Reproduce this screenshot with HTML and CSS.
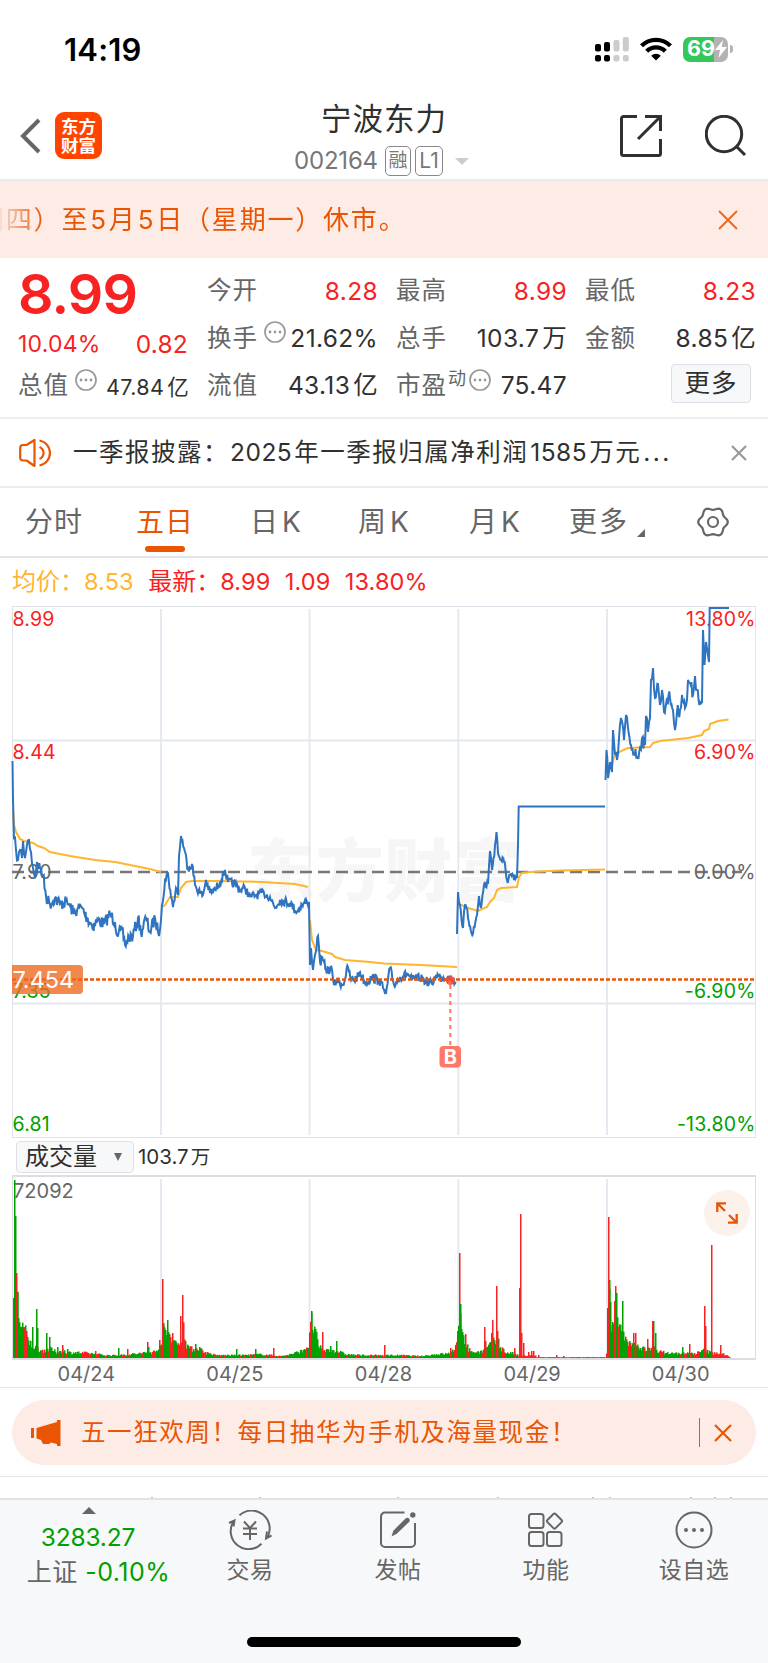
FILE: index.html
```html
<!DOCTYPE html>
<html lang="zh-CN">
<head>
    <meta charset="UTF-8">
    <meta name="viewport" content="width=device-width, initial-scale=1.0">
    <title>宁波东力 002164</title>
    <link rel="stylesheet" href="styles.css">
</head>
<body>
    <div class="status-bar">
        <span class="time">14:19</span>
        <svg class="signal" width="34" height="25" viewBox="0 0 34 25">
            <g fill="#000"><rect x="0" y="7" width="6" height="7.500" rx="2"/><rect x="0" y="18" width="6" height="6.500" rx="2"/><rect x="9" y="5" width="6" height="9.500" rx="2"/><rect x="9" y="18" width="6" height="6.500" rx="2"/></g>
            <g fill="#ccc"><rect x="18.500" y="3" width="6" height="11.500" rx="2"/><rect x="18.500" y="18" width="6" height="6.500" rx="2"/><rect x="27.800" y="0" width="6" height="14.500" rx="2"/><rect x="27.800" y="18" width="6" height="6.500" rx="2"/></g>
        </svg>
        <svg class="wifi" width="32" height="24" viewBox="0 0 32 24">
            <g fill="none" stroke="#000" stroke-width="4.300">
                <path d="M1.500 8.800a20.500 20.500 0 0 1 29 0"/>
                <path d="M6.700 14.300a13 13 0 0 1 18.600 0"/>
            </g>
            <path d="M16 23.500l-4.800-4.800a6.800 6.800 0 0 1 9.600 0z"/>
        </svg>
        <div class="battery">
            <span>69</span>
            <svg width="12" height="18" viewBox="0 0 12 18"><path d="M8 0L0 10h5L3.500 18 12 7H6.800z" fill="#fff"/></svg>
        </div>
        <i class="battery-tip"></i>
    </div>

    <header class="header">
        <div class="header-left">
            <svg width="22" height="36" viewBox="0 0 22 36"><path d="M20 2L4 18l16 16" fill="none" stroke="#666" stroke-width="4"/></svg>
            <div class="logo">东方<br>财富</div>
        </div>
        <div class="header-title">
            <h1>宁波东力</h1>
            <div class="code-row">
                <span class="code">002164</span>
                <span class="tag">融</span>
                <span class="tag tag-l1">L1</span>
                <i class="caret"></i>
            </div>
        </div>
        <div class="header-right">
            <svg width="42" height="42" viewBox="0 0 42 42" fill="none" stroke="#303030" stroke-width="3">
                <path d="M17 1.500H3.500a2 2 0 0 0-2 2v35a2 2 0 0 0 2 2h35a2 2 0 0 0 2-2V24"/>
                <path d="M25 1.500h15.500V16M40 2L18 24"/>
            </svg>
            <svg width="42" height="42" viewBox="0 0 42 42" fill="none" stroke="#303030" stroke-width="3">
                <circle cx="19" cy="19" r="17.700"/>
                <path d="M31.500 31.500l8.500 8.500"/>
            </svg>
        </div>
    </header>

    <div class="notice">
        <div class="notice-text"><span>期四）至<b>5</b>月<b>5</b>日（星期一）休市。</span></div>
        <svg class="notice-close" width="20" height="20" viewBox="0 0 20 20"><path d="M1 1l18 18M19 1L1 19" stroke="#ee6820" stroke-width="2"/></svg>
    </div>

    <section class="quote">
        <div class="quote-main">
            <div class="price">8.99</div>
            <div class="change"><span class="pct">10.04%</span><span>0.82</span></div>
            <div class="cell small"><label>总值</label><svg class="more-dot" viewBox="0 0 22 22"><use href="#dots"/></svg><b>47.84<em>亿</em></b></div>
        </div>
        <div class="quote-col">
            <div class="cell red"><label>今开</label><b>8.28</b></div>
            <div class="cell"><label>换手</label><svg class="more-dot" viewBox="0 0 22 22"><use href="#dots"/></svg><b>21.62%</b></div>
            <div class="cell"><label>流值</label><b>43.13<em>亿</em></b></div>
        </div>
        <div class="quote-col">
            <div class="cell red"><label>最高</label><b>8.99</b></div>
            <div class="cell"><label>总手</label><b>103.7<em>万</em></b></div>
            <div class="cell"><label>市盈<sup>动</sup></label><svg class="more-dot tight" viewBox="0 0 22 22"><use href="#dots"/></svg><b>75.47</b></div>
        </div>
        <div class="quote-col">
            <div class="cell red"><label>最低</label><b>8.23</b></div>
            <div class="cell"><label>金额</label><b>8.85<em>亿</em></b></div>
            <div class="cell"><button class="more-btn">更多</button></div>
        </div>
    </section>

    <div class="news">
        <svg width="34" height="30" viewBox="0 0 34 30" fill="none" stroke="#ea5504" stroke-width="2.200">
            <path d="M15.500 2v26L7.500 22.500H4q-2.800 0-2.800-3V10q0-3 2.800-3h3.500z" stroke-linejoin="round"/>
            <path d="M20.500 9a6.500 6.500 0 0 1 0 12M20.500 2.500a12.700 12.700 0 0 1 0 25"/>
        </svg>
        <span class="news-text">一季报披露：<b class="year">2025</b>年一季报归属净利润<b>1585</b>万元<b class="ell">...</b></span>
        <svg class="news-close" width="16" height="16" viewBox="0 0 16 16"><path d="M1 1l14 14M15 1L1 15" stroke="#999" stroke-width="2.200"/></svg>
    </div>

    <nav class="tabs">
        <span class="tab">分时</span>
        <span class="tab active">五日</span>
        <span class="tab">日<b>K</b></span>
        <span class="tab">周<b>K</b></span>
        <span class="tab">月<b>K</b></span>
        <span class="tab tab-more">更多</span>
        <svg class="gear" width="32" height="32" viewBox="-16 -16 32 32" fill="none" stroke="#666" stroke-width="2.200"><path id="gearPath"/><circle r="5"/></svg>
    </nav>

    <div class="legend">
        <span class="avg">均价：<b>8.53</b></span>
        <span class="last">最新：<b>8.99</b></span>
        <span class="last"><b>1.09</b></span>
        <span class="last"><b>13.80%</b></span>
    </div>

    <svg class="chart" id="priceChart" width="768" height="533" viewBox="0 606 768 533">
        <text class="watermark" x="247" y="896" textLength="274">东方财富</text>
        <g class="grid">
            <path d="M161 609V1135M309.500 609V1135M458.300 609V1135M607 609V1135M12.500 740.500H755M12.500 1003.500H755"/>
        </g>
        <rect class="frame" x="12.500" y="606.500" width="743" height="531"/>
        <path d="M12 872H742" stroke="#777" stroke-width="2.400" stroke-dasharray="12 6"/>
        <g class="axis">
            <text x="12.500" y="626" class="up">8.99</text>
            <text x="12.500" y="758.500" class="up">8.44</text>
            <text x="12.500" y="878.500">7.90</text>
            <text x="12.500" y="998" class="down">7.35</text>
            <text x="12.500" y="1130.500" class="down">6.81</text>
        </g>
        <g class="axis" text-anchor="end">
            <text x="755.500" y="626" class="up">13.80%</text>
            <text x="755.500" y="758.500" class="up">6.90%</text>
            <text x="755.500" y="878.500">0.00%</text>
            <text x="755.500" y="998" class="down">-6.90%</text>
            <text x="755.500" y="1130.500" class="down">-13.80%</text>
        </g>
        <g id="avgLines"></g>
        <g id="priceLines"></g>
        <path d="M12 979.500H755" stroke="#ea5504" stroke-width="2.600" stroke-dasharray="4 2"/>
        <path d="M12 965H79q4 0 4 4V990q0 4-4 4H12z" fill="#ee6a20" fill-opacity=".8"/>
        <text class="cost" x="12.500" y="988">7.454</text>
        <circle cx="450.300" cy="980.500" r="4.600" fill="#ff4a30" fill-opacity=".85"/>
        <path d="M450.300 985V1046" stroke="#ff7766" stroke-width="2" stroke-dasharray="4 4"/>
        <rect x="439.500" y="1046" width="21.500" height="21.500" rx="4" fill="#ff7766"/>
        <text class="buy" x="450.300" y="1063.500" text-anchor="middle">B</text>
    </svg>

    <div class="volume-bar">
        <button class="volume-select">成交量<i></i></button>
        <span>103.7<em>万</em></span>
    </div>

    <div class="volume">
        <svg class="chart" width="768" height="186" viewBox="0 1175 768 186">
            <g class="grid"><path d="M161 1179V1358M309.500 1179V1358M458.300 1179V1358M607 1179V1358"/></g>
            <path d="M12.500 1175V1359M755.500 1175V1359" stroke="#dcdce2"/>
            <path d="M12 1176H756M12 1359H756" stroke="#dcdce2" stroke-width="2"/>
            <text class="axis-vol" x="13" y="1198">72092</text>
            <g id="volumeBars"></g>
        </svg>
        <div class="expand">
            <svg width="24" height="24" viewBox="0 0 24 24" fill="none" stroke="#ea5504" stroke-width="2.300"><path d="M2.300 11V2.300H11M2.500 2.500L10 10M21.700 13v8.700H13M21.500 21.500L14 14"/></svg>
        </div>
    </div>
    <div class="dates"><span>04/24</span><span>04/25</span><span>04/28</span><span>04/29</span><span>04/30</span></div>

    <div class="promo-wrap">
        <div class="promo">
            <svg width="30" height="26" viewBox="0 0 30 26" fill="#ea5504"><path d="M0 8h3v10H0zM5.500 8L26 2V0h3.500v26H26v-2l-6-1.500-2 1.500h-6l-2-4-4.500-1.500z"/></svg>
            <span class="promo-text">五一狂欢周！每日抽华为手机及海量现金！</span>
            <i class="promo-line"></i>
            <svg class="promo-close" width="18" height="18" viewBox="0 0 18 18"><path d="M1 1l16 16M17 1L1 17" stroke="#ea5504" stroke-width="2.200"/></svg>
        </div>
    </div>
    <div class="peek">
        <svg width="768" height="2" viewBox="0 0 768 2" fill="#bbb"><path d="M151 1h2v1h-2zM259 1h2v1h-2zM397 1h2v1h-2zM497 1h2v1h-2zM592 1h2v1h-2zM609 1h2v1h-2zM690 1h2v1h-2zM714 1h2v1h-2zM730 1h2v1h-2z"/></svg>
    </div>

    <footer class="bottom">
        <div class="index">
            <i class="up-caret"></i>
            <div class="green">3283.27</div>
            <div class="index-row">上证 <span class="green">-0.10%</span></div>
        </div>
        <div class="tool">
            <svg width="44" height="40" viewBox="-22 -20 44 40" fill="none" stroke="#666" stroke-width="2">
                <path d="M-10.500-14.700A18 18 0 0 1 17.300 7.500M11.500 13.800A18 18 0 0 1-16.500-8.500"/>
                <path d="M21.500 5.500l-5.500 3 1-7M-21-7l5.500-2.500-1 6"/>
                <path d="M-6-8.500L0-2l6-6.500M-7-1.500H7M-7 4H7M0-2V10"/>
            </svg>
            <span>交易</span>
        </div>
        <div class="tool">
            <svg width="40" height="40" viewBox="0 0 40 40" fill="none" stroke="#666" stroke-width="2">
                <path d="M26.500 2.500H7a4 4 0 0 0-4 4V33a4 4 0 0 0 4 4H33a4 4 0 0 0 4-4V13"/>
                <g fill="#666" stroke="none"><path d="M13.500 26.500l1.800-5.800L27.500 8.500q2-1.500 3.500 0t0 3.500L18.800 23.800z"/><circle cx="34.800" cy="5" r="2.700"/></g>
            </svg>
            <span>发帖</span>
        </div>
        <div class="tool">
            <svg width="40" height="40" viewBox="0 0 40 40" fill="none" stroke="#666" stroke-width="2">
                <rect x="3" y="4" width="14.500" height="14" rx="2.500"/><rect x="3" y="22" width="14.500" height="14" rx="2.500"/><rect x="21" y="22" width="14.500" height="14" rx="2.500"/>
                <rect x="22.800" y="5.300" width="11.500" height="11.500" rx="1.500" transform="rotate(45 28.500 11)"/>
            </svg>
            <span>功能</span>
        </div>
        <div class="tool">
            <svg width="40" height="40" viewBox="0 0 40 40"><circle cx="20" cy="20" r="17.500" fill="none" stroke="#666" stroke-width="2"/><g fill="#666"><circle cx="12" cy="20" r="2"/><circle cx="20" cy="20" r="2"/><circle cx="28" cy="20" r="2"/></g></svg>
            <span>设自选</span>
        </div>
        <div class="home-indicator"></div>
    </footer>

    <svg width="0" height="0" class="defs">
        <defs>
            <g id="dots"><circle cx="11" cy="11" r="10" fill="none" stroke="#999" stroke-width="1.700"/><g fill="#999"><circle cx="6" cy="11" r="1.400"/><circle cx="11" cy="11" r="1.400"/><circle cx="16" cy="11" r="1.400"/></g></g>
        </defs>
    </svg>
    <script src="chart.js"></script>
</body>
</html>
```
FILE: styles.css
```css
* {
    box-sizing: border-box;
}
body {
    margin: 0;
    width: 768px;
    height: 1663px;
    overflow: hidden;
    background: #fff;
    color: #303030;
    font-family: Inter, "Noto Sans CJK SC", sans-serif;
    font-size: 24.5px;
    line-height: 1;
}
svg {
    display: block;
    flex: none;
}
b, em, i {
    font-weight: 400;
    font-style: normal;
}
button {
    font-family: inherit;
    color: inherit;
}
.defs {
    position: absolute;
}

/* status bar */
.status-bar {
    display: flex;
    align-items: center;
    height: 98px;
    padding-left: 64px;
}
.time {
    width: 531px;
    font-size: 31px;
    font-weight: 600;
    letter-spacing: 0.2px;
    color: #000;
}
.wifi {
    margin-left: 11px;
}
.battery {
    display: flex;
    align-items: center;
    width: 45px;
    height: 25px;
    margin-left: 11px;
    padding-left: 4px;
    border-radius: 7px;
    background: linear-gradient(90deg, #34c759 31px, #b3b3b3 31px);
    color: #fff;
    font-size: 21.5px;
    font-weight: 700;
}
.battery-tip {
    width: 3px;
    height: 8px;
    margin-left: 2px;
    border-radius: 0 4px 4px 0;
    background: #b3b3b3;
}

/* header */
.header {
    display: flex;
    height: 83px;
    border-bottom: 2px solid #e9eaec;
}
.header-left {
    display: flex;
    align-items: flex-start;
    width: 250px;
    padding: 14px 0 0 19px;
}
.header-left svg {
    margin-top: 6px;
}
.logo {
    width: 47px;
    height: 47px;
    margin-left: 14px;
    padding-top: 5px;
    border-radius: 9px;
    background: #ff4400;
    color: #fff;
    font-size: 17.5px;
    font-weight: 700;
    line-height: 19px;
    text-align: center;
}
.header-title {
    width: 268px;
    text-align: center;
}
h1 {
    margin: 4px 0 0;
    font-size: 30.5px;
    font-weight: 400;
    letter-spacing: 1px;
    line-height: 34px;
}
.code-row {
    display: flex;
    align-items: center;
    height: 32px;
    margin-top: 9px;
    padding-left: 44px;
    color: #777;
}
.code {
    width: 91px;
    font-size: 24px;
    letter-spacing: -0.2px;
    text-align: left;
}
.tag {
    width: 26px;
    height: 30px;
    margin-right: 4px;
    border: 1.500px solid #888;
    border-radius: 5px;
    font-size: 19px;
    line-height: 28px;
}
.tag-l1 {
    width: 28px;
    font-size: 21px;
}
.caret {
    margin-left: 8px;
    border: 7px solid transparent;
    border-top-color: #ccc;
    border-bottom: 0;
}
.header-right {
    display: flex;
    gap: 43px;
    padding: 17px 0 0 102px;
}

/* notice */
.notice {
    display: flex;
    align-items: center;
    height: 77px;
    background: #fdece5;
    color: #ea5504;
}
.notice-text {
    display: flex;
    width: 718px;
    overflow: hidden;
    font-size: 26px;
    letter-spacing: 1.8px;
    line-height: 38px;
    white-space: nowrap;
    -webkit-mask-image: linear-gradient(90deg, rgba(0, 0, 0, .1), #000 44px);
    mask-image: linear-gradient(90deg, rgba(0, 0, 0, .1), #000 44px);
}
.notice-text span {
    margin-left: -22px;
}
.notice-text b {
    margin: 0 1px;
}

/* quote */
.quote {
    display: grid;
    grid-template-columns: repeat(4, 170px);
    column-gap: 19px;
    height: 161px;
    padding: 9px 0 0 18px;
    border-bottom: 2px solid #ededf0;
}
.price {
    height: 54px;
    color: #f82222;
    font-size: 55.5px;
    font-weight: 600;
    letter-spacing: -0.8px;
    line-height: 54px;
}
.change {
    display: flex;
    justify-content: space-between;
    align-items: center;
    height: 41px;
    padding-top: 6px;
    color: #f82222;
}
.change span {
    letter-spacing: 0.2px;
}
.change .pct {
    font-size: 23px;
    letter-spacing: 0.2px;
}
.cell {
    display: flex;
    align-items: center;
    height: 47.3px;
    white-space: nowrap;
}
.cell label {
    color: #666;
    letter-spacing: 1px;
}
.cell b {
    margin: 0 -1px 0 auto;
    letter-spacing: 0.35px;
}
.cell b em {
    margin-left: 3px;
}
.cell.small b {
    font-size: 21.5px;
    padding-top: 4px;
}
.cell.red b {
    padding-top: 1px;
    color: #f82222;
}
.cell sup {
    margin-left: 1px;
    font-size: 18px;
    line-height: 0;
    vertical-align: 9px;
}
.more-dot {
    width: 22px;
    height: 22px;
    margin: -11px 0 0 6px;
}
.more-dot.tight {
    margin-left: 2px;
}
.more-btn {
    width: 80px;
    height: 39px;
    margin: -4px 4px 0 auto;
    padding: 0;
    border: 1.500px solid #dde0e6;
    border-radius: 4px;
    background: #f7f8fa;
    font-size: 25.5px;
    letter-spacing: 1px;
    line-height: 34px;
}

/* news */
.news {
    display: flex;
    align-items: center;
    height: 69px;
    padding: 0 21px 0 19px;
    border-bottom: 2px solid #ededf0;
}
.news-text {
    margin-left: 20px;
    letter-spacing: 1.5px;
    white-space: nowrap;
}
.news-text b {
    letter-spacing: 0.5px;
    margin: 0 2px;
}
.news-text .year {
    margin-left: 1px;
}
.news-text .ell {
    letter-spacing: 2.5px;
}
.news-close {
    margin-left: auto;
}

/* tabs */
.tabs {
    display: flex;
    align-items: center;
    height: 70px;
    padding-left: 25px;
    border-bottom: 2px solid #e2e5ea;
    color: #666;
    font-size: 28px;
}
.tab {
    position: relative;
    width: 111px;
    letter-spacing: 1px;
    white-space: nowrap;
}
.tab b {
    margin-left: 3px;
}
.tab.active {
    width: 114px;
    color: #ea5504;
}
.tab.active::after {
    content: "";
    position: absolute;
    left: 9px;
    bottom: -16px;
    width: 40px;
    height: 6px;
    border-radius: 3px;
    background: #ea5504;
}
.tab:nth-child(3) {
    width: 108px;
}
.tab:nth-child(5) {
    width: 113px;
}
.tab-more {
    width: 128px;
    margin-left: -13px;
    letter-spacing: 2px;
}
.tab-more::after {
    content: "";
    position: absolute;
    left: 68px;
    bottom: -1px;
    border: 4px solid #666;
    border-top-color: transparent;
    border-left-color: transparent;
}

/* legend */
.legend {
    display: flex;
    align-items: center;
    gap: 14.5px;
    height: 48px;
    padding-left: 12px;
    font-size: 24px;
    white-space: nowrap;
}
.legend b {
    font-size: 23.5px;
    letter-spacing: 0.1px;
}
.avg {
    color: #ffb52e;
}
.last {
    color: #f82222;
}

/* charts */
.grid {
    fill: none;
    stroke: #e3e7ef;
    stroke-width: 1.8;
}
.frame {
    fill: none;
    stroke: #dfe2e8;
}
.axis text {
    font-size: 19.5px;
    letter-spacing: 0.2px;
    fill: #666;
}
.axis .up {
    fill: #f82222;
}
.axis .down {
    fill: #00a000;
}
.axis-vol {
    font-size: 20px;
    fill: #666;
}
.watermark {
    font-size: 68px;
    font-weight: 900;
    fill: #f6f6f6;
}
.cost {
    font-size: 23.5px;
    fill: #fff;
}
.buy {
    font-size: 20px;
    font-weight: 700;
    fill: #fff;
}
.volume-bar {
    display: flex;
    align-items: center;
    height: 36px;
    padding: 0 0 0 16px;
    font-size: 20.5px;
}
.volume-bar em {
    margin-left: 2px;
    font-size: 19.5px;
}
.volume-select {
    display: flex;
    align-items: center;
    width: 118px;
    height: 32px;
    margin-right: 4px;
    padding: 0 0 0 8px;
    border: 1.500px solid #dde0e6;
    border-radius: 4px;
    background: #f7f8fa;
    font-size: 24px;
    line-height: 28px;
}
.volume-select i {
    margin-left: 17px;
    border: 4.5px solid transparent;
    border-top: 8px solid #666;
    border-bottom: 0;
}
.volume {
    position: relative;
}
.expand {
    position: absolute;
    top: 15px;
    left: 704px;
    display: flex;
    align-items: center;
    justify-content: center;
    width: 46px;
    height: 46px;
    border-radius: 50%;
    background: #fdf1eb;
}
.dates {
    display: flex;
    height: 27px;
    padding: 0 13px 0 12px;
    border-bottom: 1px solid #e6e6e8;
    color: #666;
    font-size: 20px;
    line-height: 27px;
}
.dates span {
    flex: 1;
    text-align: center;
}

/* promo */
.promo-wrap {
    height: 89px;
    padding: 12px 12px 0;
    border-bottom: 1px solid #e6e6e8;
}
.promo {
    display: flex;
    align-items: center;
    height: 65px;
    padding: 0 24px 0 19px;
    border-radius: 33px;
    background: #fdece5;
    color: #ea5504;
}
.promo-text {
    margin-left: 20px;
    letter-spacing: 1.6px;
}
.promo-line {
    width: 1px;
    height: 29px;
    margin-left: auto;
    background: #ea5504;
}
.promo-close {
    margin-left: 14px;
}
.peek {
    display: flex;
    align-items: flex-end;
    height: 21px;
}

/* bottom bar */
.bottom {
    position: relative;
    display: flex;
    height: 166px;
    border-top: 2px solid #e0e3e8;
    background: #f7f8fa;
    color: #666;
}
.index {
    width: 176px;
    text-align: center;
}
.up-caret {
    display: block;
    width: 14px;
    margin: 7px auto 0 82px;
    border: 7px solid transparent;
    border-bottom-color: #666;
    border-top: 0;
}
.green {
    color: #00a000;
}
.index > .green {
    margin-top: 11px;
    letter-spacing: -0.2px;
}
.index-row {
    width: 197px;
    margin-top: 10px;
    font-size: 25px;
    letter-spacing: 0.5px;
}
.tool {
    display: flex;
    flex-direction: column;
    align-items: center;
    width: 148px;
    padding-top: 10px;
    font-size: 23px;
    letter-spacing: 0.5px;
}
.tool span {
    margin-top: 9px;
}
.home-indicator {
    position: absolute;
    left: 247px;
    bottom: 17px;
    width: 274px;
    height: 10px;
    border-radius: 5px;
    background: #000;
}
```
FILE: chart.js
```js
const NS = 'http://www.w3.org/2000/svg';

// small seeded generator so the ticks look the same on every load
let seed = 7;
function rnd() {
    seed = (seed * 16807) % 2147483647;
    return seed / 2147483647;
}

const prices = [
    '12.5,761 13,800 14,838 16,850 18,860 20,850 22,858 23,841 25,858 27,845 29,840 31,852 33,868 35,878 37,862 40,868 43,876 46,896 50,904 55,898 60,904 66,902 70,906 74,914 78,908 82,908 87,918 93,926 98,920 104,924 110,914 115,922 118,936 122,930 125,945 129,937 133,936 138,918 141,933 146,918 150,932 155,918 158,932 160,930',
    '160,930 161,920 162,905 165,880 168,873 171,897 173,907 176,888 178,895 179,856 181,836 184,848 188,868 192,864 195,885 200,893 203,895 206,880 210,893 215,890 220,882 225,870 228,882 235,884 240,890 245,888 250,897 256,895 264,893 270,897 275,908 280,900 290,903 297,912 302,905 307,902 309,902 310,965',
    '310,965 311,948 313,970 315,955 318,936 320,962 323,960 326,970 332,970 334,985 337,980 343,985 348,967 351,980 357,978 360,972 365,983 372,978 379,980 383,988 386,994 390,968 394,985 400,977 408,974 412,980 420,978 426,981 432,984 436,975 442,978 448,976 452,980 456,982',
    '457,934 458,892 460,905 463,928 465,905 468,918 473,934 477,915 479,896 481,908 484,885 488,884 489,866 490,851 492,870 495,845 496.5,832 498,853 501,860 504,862 507,880 510,875 514,880 517,878',
    '605.5,780 606.5,750 608,778 610,762 612,772 613,730 615,755 617,760 619,738 621,718 624,740 626,715 628,728 631,745 634,752 637,757 640,748 642,738 645,745 646,716 648,732 650,718 651,680 653,668 655,698 658,684 660,705 662,690 664,712 667,698 670,698 673,710 675,730 677,712 680,710 682,695 685,708 687,700 688,680 690,683 693,695 695,676 697,690 700,702 702,703'
];
const flats = [
    '517,878 518,845 518.7,806.5 605,806.5',
    '702,703 703,630 704.5,665 706,642 709,662 709.7,608 729,608'
];
const averages = [
    '13,810 14,825 16,832 20,839 24,841 33,843 38,846 44,848 50,852 70,856 95,860 115,862 135,866 150,869 161,872',
    '162,907 165,905 170,897 178,897 181,888 186,882 192,881 220,881 262,882 295,884 308,887',
    '310,920 312,940 316,950 322,951 332,954 335,957 345,960 370,962 384,963.5 420,965 457,967',
    '458,905 462,905 465,907 478,911 487,907 490,902 494,898 497,890 501,888 517,887 519,877 522,873 530,872 560,870.5 605,869.5',
    '607,768 612,765 614,757 617,754 621,751 628,748 650,747 653,743 660,741 688,738 702,735 704,731 709,729 710,724 718,721 728.5,719.5'
];

function parse(str) {
    return str.split(' ').map(p => p.split(',').map(Number));
}

function addNoise(points, amp) {
    const out = [points[0]];
    for (let i = 1; i < points.length; i++) {
        const [x0, y0] = points[i - 1];
        const [x1, y1] = points[i];
        const steps = Math.floor((x1 - x0) / 0.7);
        for (let s = 1; s < steps; s++) {
            const t = s / steps;
            out.push([x0 + (x1 - x0) * t, y0 + (y1 - y0) * t + (rnd() - 0.5) * amp * 2]);
        }
        out.push([x1, y1]);
    }
    return out;
}

function drawLine(parent, points, color, width) {
    const line = document.createElementNS(NS, 'polyline');
    line.setAttribute('points', points.map(p => p[0].toFixed(1) + ',' + p[1].toFixed(1)).join(' '));
    line.setAttribute('fill', 'none');
    line.setAttribute('stroke', color);
    line.setAttribute('stroke-width', width);
    document.getElementById(parent).appendChild(line);
}

const noise = [6.5, 4.5, 4.5, 5.5, 7];
averages.forEach(a => drawLine('avgLines', parse(a), '#ffb52e', 2));
prices.forEach((p, i) => drawLine('priceLines', addNoise(parse(p), noise[i]), '#2f74c0', 2));
flats.forEach(p => drawLine('priceLines', parse(p), '#2f74c0', 2));

// volume: base level along x, then single bars on top of it
const base = parse('13,60 17,60 19,42 22,36 25,28 28,18 32,13 38,10 41,8 50,10 56,6 62,9 67,6 75,6 90,5 105,3 118,3 130,4 148,6 155,7 160,17 163,30 168,27 174,24 177,12 180,16 183,38 186,15 190,10 199,10 205,6 215,3 240,3 262,4 280,2 290,4 300,7 308,14 311,40 314,32 318,12 324,8 330,9 338,7 345,4 360,3 400,3 420,2 435,4 450,5 456,14 460,50 463,25 468,9 475,6 484,8 492,16 497,22 500,12 505,6 513,5 518,3');
const base2 = parse('606,5 608,70 611,44 613,36 616,45 618,34 622,26 625,18 630,14 640,12 650,9 655,12 658,7 670,5 685,5 695,5 703,8 707,7 713,5 722,5 727,3 730,0');
const spikes = [
    [13, 60, 1], [14, 178, 0], [15, 142, 0], [16, 85, 1], [17, 66, 0], [24, 31, 1], [32, 31, 0], [36, 49, 0], [37, 30, 0], [46, 25, 0], [49, 21, 0],
    [57, 11, 0], [62, 13, 1], [67, 9, 0], [95, 7, 1], [118, 10, 0], [127, 9, 1], [147, 16, 1], [148, 11, 0], [159, 18, 1], [162, 79, 1], [163, 35, 0],
    [167, 38, 0], [180, 42, 1], [182, 63, 1], [195, 14, 0], [199, 11, 0], [236, 9, 0], [255, 9, 0], [273, 10, 1], [311, 47, 0], [322, 26, 1],
    [330, 12, 0], [336, 17, 0], [384, 13, 1], [450, 10, 1], [457, 21, 0], [459, 105, 1], [460, 54, 0], [465, 24, 1], [484, 31, 1], [485, 17, 1],
    [491, 25, 1], [492, 38, 1], [496, 72, 1], [497, 27, 1], [514, 10, 1], [519, 70, 1], [520, 144, 1], [521, 25, 1], [523, 15, 1], [528, 6, 1],
    [531, 7, 1], [533, 7, 1], [538, 3, 1], [556, 3, 1], [563, 2, 1], [607, 50, 1], [608, 141, 1], [609, 78, 0], [610, 56, 0], [614, 57, 1], [615, 72, 1],
    [616, 65, 0], [622, 57, 0], [633, 25, 1], [635, 25, 1], [647, 19, 1], [652, 37, 1], [653, 37, 0], [655, 25, 0], [682, 11, 0], [689, 14, 1],
    [704, 52, 1], [705, 32, 1], [711, 113, 1], [720, 13, 1]
];

function levelAt(points, x) {
    for (let i = 1; i < points.length; i++) {
        if (x <= points[i][0]) {
            const [x0, y0] = points[i - 1];
            const [x1, y1] = points[i];
            return y0 + (y1 - y0) * (x - x0) / (x1 - x0);
        }
    }
    return 0;
}

function drawBar(x, h, red) {
    const r = document.createElementNS(NS, 'rect');
    r.setAttribute('x', x);
    r.setAttribute('y', (1358 - h).toFixed(1));
    r.setAttribute('width', 1.5);
    r.setAttribute('height', h.toFixed(1));
    r.setAttribute('fill', red ? '#f82222' : '#00a000');
    document.getElementById('volumeBars').appendChild(r);
}

for (let x = 13; x < 730; x++) {
    let level;
    if (x < 518) level = levelAt(base, x);
    else if (x < 606) level = x < 536 ? 2.5 : 0.8;
    else level = levelAt(base2, x);
    const redDay = (x >= 518 && x < 606) || x > 712;
    const h = level * (0.6 + rnd() * 0.6);
    drawBar(x, h, redDay || rnd() > 0.72);
}
spikes.forEach(s => drawBar(s[0], s[1], s[2]));

// six-lobed gear outline
let gear = '';
for (let a = 0; a < 360; a += 6) {
    const r = 13.5 + 1.3 * Math.cos(a * 6 * Math.PI / 180);
    gear += (a ? 'L' : 'M') + (r * Math.cos(a * Math.PI / 180)).toFixed(2) + ' ' + (r * Math.sin(a * Math.PI / 180)).toFixed(2);
}
document.getElementById('gearPath').setAttribute('d', gear + 'Z');
```
